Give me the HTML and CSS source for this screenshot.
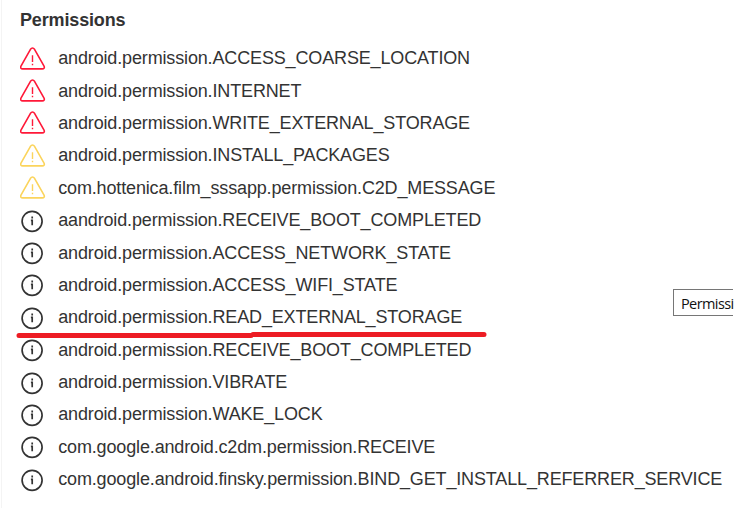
FILE: index.html
```
<!DOCTYPE html>
<html lang="en">
<head>
<meta charset="utf-8">
<title>Permissions</title>
<link rel="stylesheet" href="styles.css">
</head>
<body>
<svg class="defs" aria-hidden="true">
  <symbol id="warn" viewBox="0 0 26 24">
    <path d="M10.600 2.200 1.100 18.900c-1 1.700-.2 3 1.700 3h19.400c1.900 0 2.700-1.300 1.700-3L14.400 2.200c-1-1.700-2.800-1.700-3.800 0Z" fill="none" stroke="currentColor" stroke-width="1.600"/>
    <path d="M12.500 8.300v6.700M12.500 16.700v1.500" fill="none" stroke="currentColor" stroke-width="1.400"/>
  </symbol>
  <symbol id="info" viewBox="0 0 26 24">
    <circle cx="12.100" cy="12.300" r="10" fill="none" stroke="currentColor" stroke-width="1.700"/>
    <path d="M12.200 7.500v2M10.900 11.300h1.300v5" fill="none" stroke="currentColor" stroke-width="1.700"/>
  </symbol>
</svg>
<main class="panel">
  <h1 class="title">Permissions</h1>
  <ul class="list">
    <li class="row"><svg class="icon high"><use href="#warn"/></svg><span>android.permission.ACCESS_COARSE_LOCATION</span></li>
    <li class="row"><svg class="icon high"><use href="#warn"/></svg><span>android.permission.INTERNET</span></li>
    <li class="row"><svg class="icon high"><use href="#warn"/></svg><span>android.permission.WRITE_EXTERNAL_STORAGE</span></li>
    <li class="row"><svg class="icon medium"><use href="#warn"/></svg><span>android.permission.INSTALL_PACKAGES</span></li>
    <li class="row"><svg class="icon medium"><use href="#warn"/></svg><span>com.hottenica.film_sssapp.permission.C2D_MESSAGE</span></li>
    <li class="row"><svg class="icon"><use href="#info"/></svg><span>aandroid.permission.RECEIVE_BOOT_COMPLETED</span></li>
    <li class="row"><svg class="icon"><use href="#info"/></svg><span>android.permission.ACCESS_NETWORK_STATE</span></li>
    <li class="row"><svg class="icon"><use href="#info"/></svg><span>android.permission.ACCESS_WIFI_STATE</span></li>
    <li class="row marked"><svg class="icon"><use href="#info"/></svg><span>android.permission.READ_EXTERNAL_STORAGE</span>
      <svg class="underline" viewBox="0 0 472 8"><path d="M3 5.500H235M237 4.500H468" stroke="#ed1c24" stroke-width="5" stroke-linecap="round"/></svg></li>
    <li class="row"><svg class="icon"><use href="#info"/></svg><span>android.permission.RECEIVE_BOOT_COMPLETED</span></li>
    <li class="row"><svg class="icon"><use href="#info"/></svg><span>android.permission.VIBRATE</span></li>
    <li class="row"><svg class="icon"><use href="#info"/></svg><span>android.permission.WAKE_LOCK</span></li>
    <li class="row"><svg class="icon"><use href="#info"/></svg><span>com.google.android.c2dm.permission.RECEIVE</span></li>
    <li class="row"><svg class="icon"><use href="#info"/></svg><span>com.google.android.finsky.permission.BIND_GET_INSTALL_REFERRER_SERVICE</span></li>
  </ul>
</main>
<div class="tooltip"><span>Permissi</span></div>
</body>
</html>
```
FILE: styles.css
```
body {
  margin: 0;
  background: #fff;
  color: #333;
  font-family: "Liberation Sans", Arial, sans-serif;
  overflow: hidden;
}
.defs { position: absolute; width: 0; height: 0; }
.panel {
  box-sizing: border-box;
  height: 508px;
  margin-left: 1px;
  padding: 9px 0 0 18px;
  border-left: 1px solid #f4f4f4;
}
.title {
  margin: 0 0 11px;
  padding-top: 1px;
  font-size: 18px;
  line-height: 21px;
  letter-spacing: -.15px;
}
.list { margin: 0; padding: 0; list-style: none; }
.row {
  display: flex;
  align-items: center;
  height: 32.400px;
  font-size: 18px;
  line-height: 22px;
  letter-spacing: -.147px;
  white-space: nowrap;
}
.icon { flex: none; width: 26px; height: 24px; margin: 1px 12.200px 0 0; }
.high { color: #ff1838; }
.medium { color: #fbd45c; }
.marked { position: relative; }
.underline { position: absolute; left: -4px; top: 29px; width: 472px; height: 8px; }
.tooltip {
  position: absolute;
  left: 673px;
  top: 289px;
  box-sizing: border-box;
  width: 60px;
  height: 27px;
  padding-left: 7px;
  border: 1px solid #767676;
  border-right: 0;
  color: #111;
  font: 14.500px/27px "Open Sans", "Noto Sans", sans-serif;
  letter-spacing: -.6px;
  white-space: nowrap;
}
```
